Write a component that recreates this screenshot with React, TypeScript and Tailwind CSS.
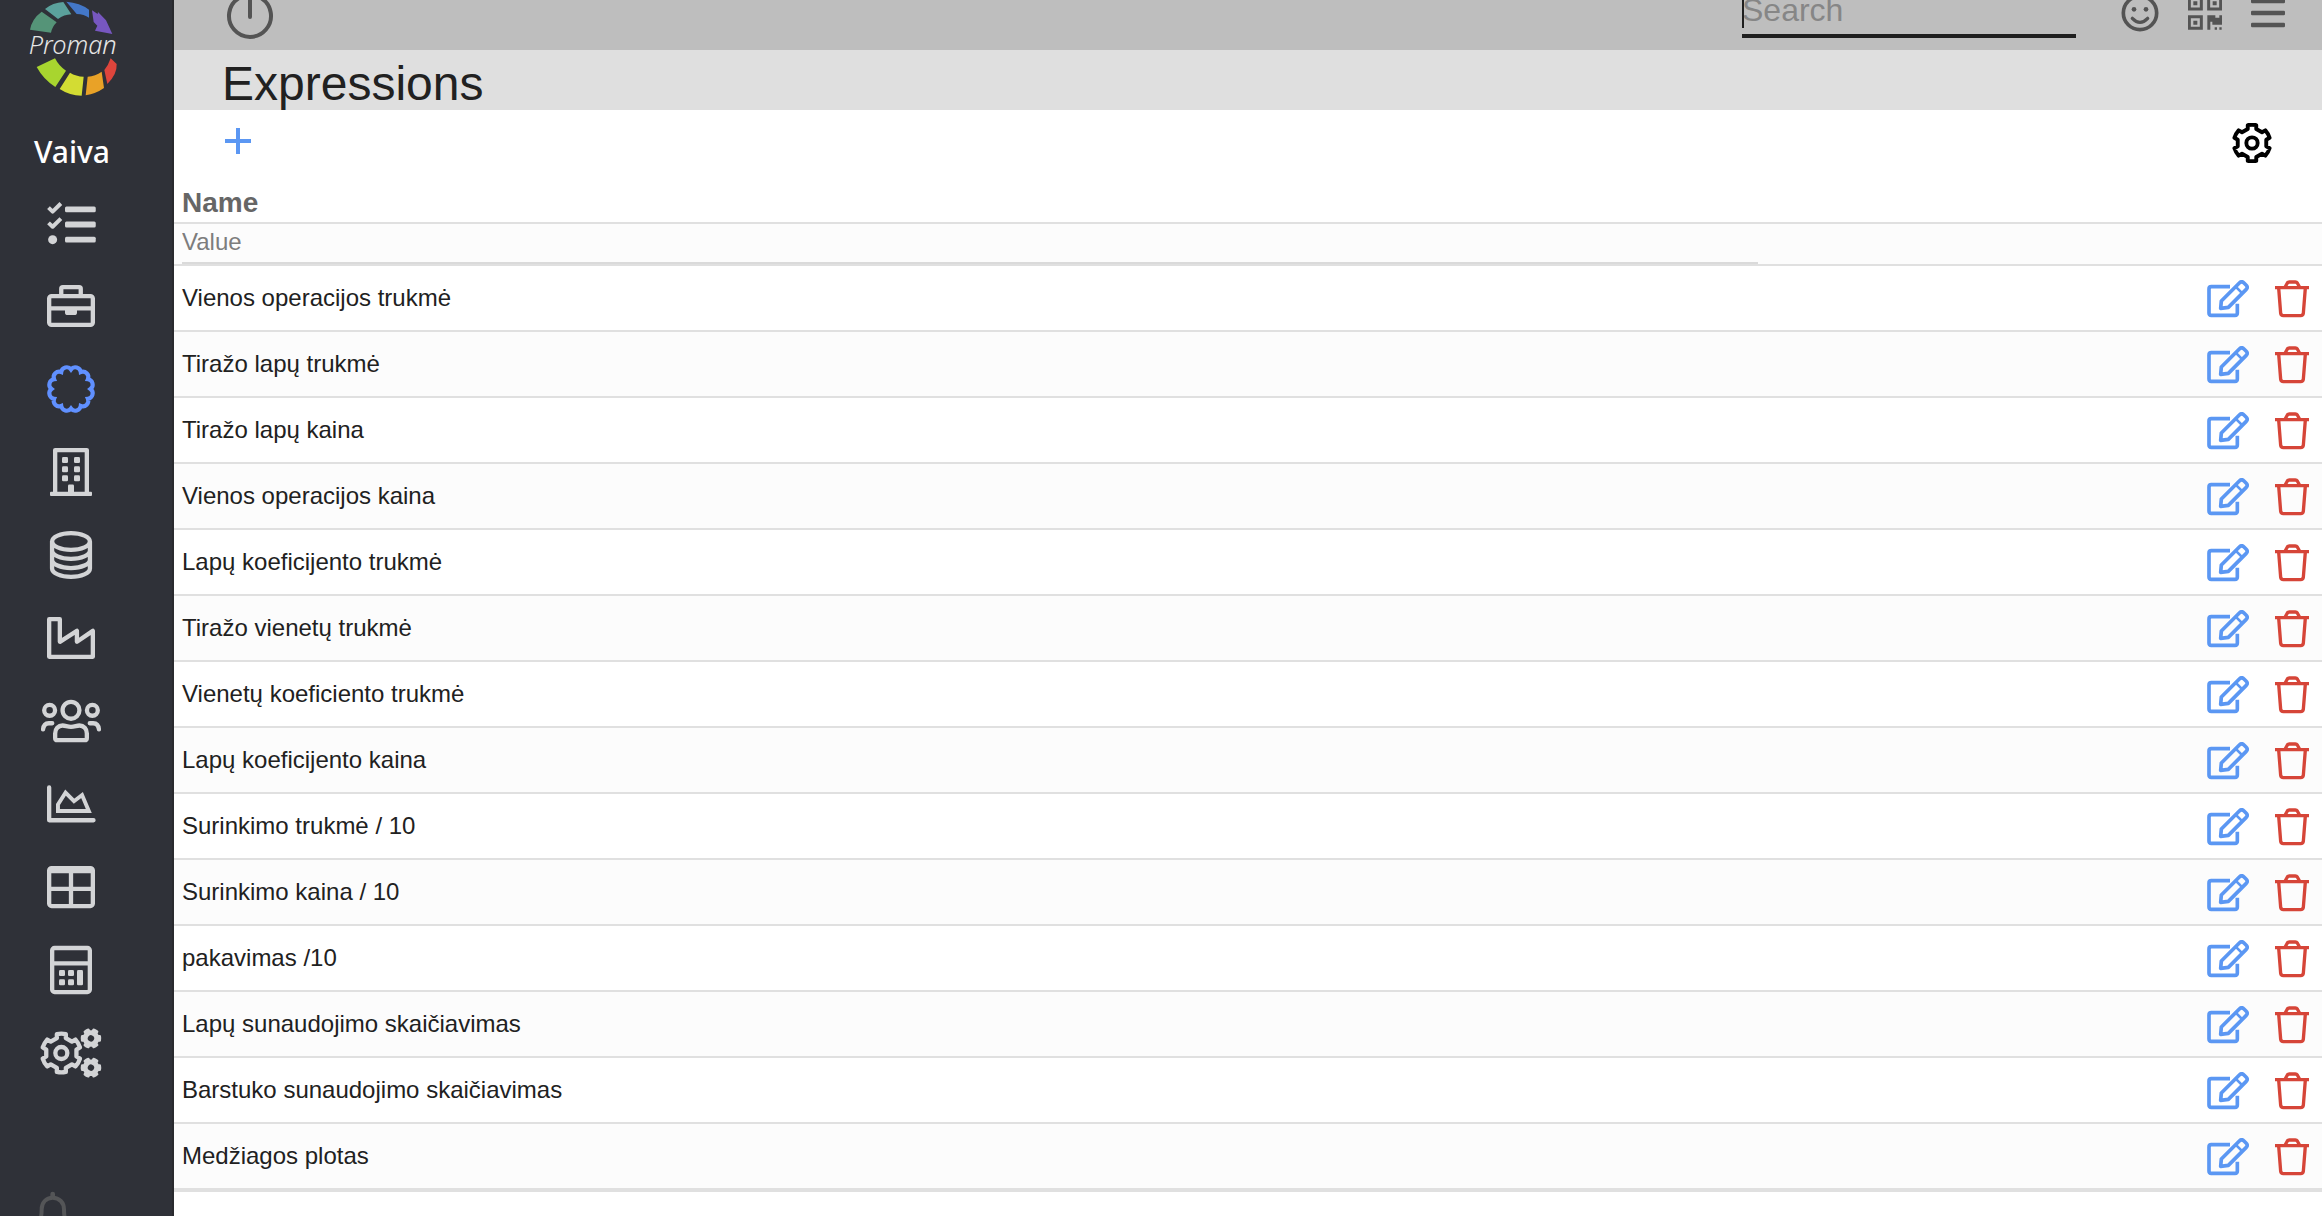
import React, { useState } from 'react'

interface Expression {
    id: number
    name: string
}

const expressions: Expression[] = [
    { id: 1, name: 'Vienos operacijos trukmė' },
    { id: 2, name: 'Tiražo lapų trukmė' },
    { id: 3, name: 'Tiražo lapų kaina' },
    { id: 4, name: 'Vienos operacijos kaina' },
    { id: 5, name: 'Lapų koeficijento trukmė' },
    { id: 6, name: 'Tiražo vienetų trukmė' },
    { id: 7, name: 'Vienetų koeficiento trukmė' },
    { id: 8, name: 'Lapų koeficijento kaina' },
    { id: 9, name: 'Surinkimo trukmė / 10' },
    { id: 10, name: 'Surinkimo kaina / 10' },
    { id: 11, name: 'pakavimas /10' },
    { id: 12, name: 'Lapų sunaudojimo skaičiavimas' },
    { id: 13, name: 'Barstuko sunaudojimo skaičiavimas' },
    { id: 14, name: 'Medžiagos plotas' },
]

// Six-tooth gear outline centred on 0,0
const GEAR =
    'M-48-158V-202Q0-212 48-202V-158L113-121L151-143Q184-106 199-59L161-37V37L199 59Q184 106 151 143L113 121L48 158V202Q0 212-48 202V158L-113 121L-151 143Q-184 106-199 59L-161 37V-37L-199-59Q-184-106-151-143L-113-121Z'
const GEAR_HOLE = 'M-98 0A98 98 0 1 0 98 0A98 98 0 1 0-98 0Z'

const NavIcon = ({ children }: { children: React.ReactNode }) => (
    <svg
        viewBox="0 0 640 512"
        className="w-[60px] h-12 overflow-visible"
        fill="none"
        stroke="currentColor"
        strokeWidth="46"
        aria-hidden="true"
    >
        {children}
    </svg>
)

const navItems = [
    {
        label: 'Tasks',
        icon: (
            <>
                <g strokeLinejoin="round" strokeWidth="42">
                    <path d="M80 92L124 134L212 48" />
                    <path d="M80 254L124 296L212 210" />
                </g>
                <g fill="currentColor" stroke="none">
                    <circle cx="124" cy="434" r="48" />
                    <rect x="256" y="80" width="328" height="62" rx="16" />
                    <rect x="256" y="241" width="328" height="62" rx="16" />
                    <rect x="256" y="403" width="328" height="62" rx="16" />
                </g>
            </>
        ),
    },
    {
        label: 'Projects',
        icon: (
            <>
                <rect x="87" y="151" width="466" height="306" rx="26" />
                <path d="M216 140V72Q216 55 233 55H407Q424 55 424 72V140M88 281H552" />
                <path
                    d="M256 290H384V324Q384 352 356 352H284Q256 352 256 324Z"
                    fill="currentColor"
                    stroke="none"
                />
            </>
        ),
    },
    {
        label: 'Products',
        active: true,
        icon: (
            <path
                strokeWidth="44"
                d="M320 48A58 58 0 0 1 424 76A58 58 0 0 1 500 152A58 58 0 0 1 528 256A58 58 0 0 1 500 360A58 58 0 0 1 424 436A58 58 0 0 1 320 464A58 58 0 0 1 216 436A58 58 0 0 1 140 360A58 58 0 0 1 112 256A58 58 0 0 1 140 152A58 58 0 0 1 216 76A58 58 0 0 1 320 48Z"
            />
        ),
    },
    {
        label: 'Companies',
        icon: (
            <>
                <path strokeLinejoin="round" d="M151 480V22H489V480" />
                <g fill="currentColor" stroke="none">
                    <rect x="96" y="466" width="448" height="46" rx="10" />
                    <rect x="224" y="97" width="64" height="64" rx="14" />
                    <rect x="352" y="97" width="64" height="64" rx="14" />
                    <rect x="224" y="194" width="64" height="64" rx="14" />
                    <rect x="352" y="194" width="64" height="64" rx="14" />
                    <rect x="224" y="291" width="64" height="64" rx="14" />
                    <rect x="352" y="291" width="64" height="64" rx="14" />
                    <path d="M288 480V402Q288 388 302 388H338Q352 388 352 402V480Z" />
                </g>
            </>
        ),
    },
    {
        label: 'Storage',
        icon: (
            <>
                <ellipse cx="320" cy="112" rx="202" ry="89" />
                <path d="M118 112V400A202 89 0 0 0 522 400V112M118 208A202 89 0 0 0 522 208M118 306A202 89 0 0 0 522 306" />
            </>
        ),
    },
    {
        label: 'Production',
        icon: (
            <path
                strokeLinejoin="round"
                d="M87 55H201V297L383 180V297L553 180V457H87Z"
            />
        ),
    },
    {
        label: 'People',
        icon: (
            <>
                <circle cx="92" cy="142" r="58" />
                <circle cx="548" cy="142" r="58" />
                <circle cx="320" cy="142" r="90" />
                <path
                    strokeLinecap="round"
                    d="M22 346C26 300 54 281 84 280H120M618 346C614 300 586 281 556 280H520"
                />
                <path d="M151 436V388C151 342 184 304 230 304C262 304 280 318 320 318C360 318 378 304 410 304C456 304 489 342 489 388V436Q489 460 465 460H175Q151 460 151 436Z" />
            </>
        ),
    },
    {
        label: 'Reports',
        icon: (
            <>
                <path
                    strokeLinecap="round"
                    strokeLinejoin="round"
                    d="M87 80V429H560"
                />
                <path strokeWidth="42" d="M181 331V262L262 134L352 226L438 160L510 331Z" />
            </>
        ),
    },
    {
        label: 'Tables',
        icon: (
            <>
                <rect x="87" y="55" width="466" height="404" rx="26" />
                <path d="M320 80V459M87 275H553M87 86H553" />
            </>
        ),
    },
    {
        label: 'Calculator',
        icon: (
            <>
                <rect x="119" y="21" width="402" height="470" rx="26" />
                <path d="M119 186H521" />
                <g fill="currentColor" stroke="none">
                    <rect x="192" y="257" width="64" height="64" rx="14" />
                    <rect x="288" y="257" width="64" height="64" rx="14" />
                    <rect x="192" y="355" width="64" height="64" rx="14" />
                    <rect x="288" y="355" width="64" height="64" rx="14" />
                    <rect x="384" y="257" width="64" height="162" rx="14" />
                </g>
            </>
        ),
    },
    {
        label: 'Settings',
        icon: (
            <>
                <g transform="translate(217 256)" strokeLinejoin="round">
                    <path d={GEAR} />
                    <circle r="64" />
                </g>
                <g
                    fill="currentColor"
                    fillRule="evenodd"
                    strokeWidth="52"
                    strokeLinejoin="round"
                >
                    <path
                        d={GEAR + GEAR_HOLE}
                        transform="translate(533 100) rotate(30) scale(.47)"
                    />
                    <path
                        d={GEAR + GEAR_HOLE}
                        transform="translate(533 412) rotate(30) scale(.47)"
                    />
                </g>
            </>
        ),
    },
]

const Logo = () => (
    <svg viewBox="0 0 516 288" className="block w-[172px] h-24" role="img" aria-label="Proman">
        <path fill="#559478" d="M90 89Q96 56 125 35L170 67Q157 80 153 98Z" />
        <path fill="#5ba19c" d="M135 27Q158 8 190 6L214 43Q192 44 174 57Z" />
        <path fill="#4377c8" d="M199 5Q240 8 267 29V53Q252 43 230 42Z" />
        <path fill="#7757c0" d="M276 31L293 42L294 36L318 61L337 102L285 92L292 77L281 66Z" />
        <path fill="#a8d52f" d="M110 201L165 175Q178 200 198 212L166 261Q130 238 110 201Z" />
        <path fill="#d3dc33" d="M210 218Q228 229 251 230L245 287Q209 287 179 267Z" />
        <path fill="#e9a227" d="M263 230Q286 228 305 215L312 264Q288 281 257 286Z" />
        <path fill="#de453c" d="M332 175L350 192Q352 222 322 252L313 210Q325 196 332 175Z" />
        <text
            x="86"
            y="161"
            fill="#e6e6e6"
            className="font-['Noto_Sans','Open_Sans',sans-serif] font-light italic text-[76px]"
        >
            Proman
        </text>
    </svg>
)

const Gear = () => (
    <svg
        viewBox="-226 -226 452 452"
        className="size-10"
        fill="none"
        stroke="currentColor"
        strokeWidth="44"
        strokeLinejoin="round"
        aria-hidden="true"
    >
        <path d={GEAR} />
        <circle r="64" />
    </svg>
)

const EditIcon = () => (
    <svg
        viewBox="0 0 126 114"
        className="w-[42px] h-[38px]"
        fill="none"
        stroke="currentColor"
        strokeWidth="11"
        strokeLinejoin="round"
        aria-hidden="true"
    >
        <path d="M69 20H13Q6 20 6 27V99Q6 106 13 106H84Q91 106 91 99V71" />
        <path d="M43 63L97 9Q104 2 111 9L117 15Q124 22 117 29L64 82L41 85Z" />
        <path d="M86 20L106 40" strokeWidth="8" />
    </svg>
)

const TrashIcon = () => (
    <svg
        viewBox="0 0 102 114"
        className="w-[34px] h-[38px]"
        fill="none"
        stroke="currentColor"
        strokeWidth="10"
        aria-hidden="true"
    >
        <path d="M0 23H102M30 22L37 9Q39 6 43 6H61Q65 6 67 9L74 22" />
        <path d="M11 24L17 100Q18 107 25 107H77Q84 107 85 100L91 24" />
    </svg>
)

const Sidebar = () => (
    <aside className="sticky top-0 h-screen w-[174px] shrink-0 overflow-hidden border-r-2 border-[#292a2e] bg-[#2f3138] text-[#d3d4d6]">
        <Logo />
        <div className="pt-[27px] pr-7 text-center font-['Noto_Sans','Open_Sans',sans-serif] text-[30px] leading-[58px] font-medium text-white">
            Vaiva
        </div>
        <nav className="flex flex-col">
            {navItems.map((item) => (
                <a
                    key={item.label}
                    href="#"
                    aria-label={item.label}
                    className={`flex h-[83px] items-center justify-center pr-[30px] ${
                        item.active ? 'text-[#6090ff]' : ''
                    }`}
                >
                    <NavIcon>{item.icon}</NavIcon>
                </a>
            ))}
        </nav>
        <button aria-label="Notifications" className="mt-24 ml-8 block text-[#545557]">
            <svg
                viewBox="0 0 126 144"
                className="w-[42px] h-12"
                fill="none"
                stroke="currentColor"
                strokeWidth="12"
                aria-hidden="true"
            >
                <path strokeLinecap="round" strokeWidth="14" d="M62 12V20" />
                <path d="M62 23C42 23 29 38 29 58C29 88 22 98 10 110H114C102 98 96 88 96 58C96 38 82 23 62 23Z" />
            </svg>
        </button>
    </aside>
)

const Header = () => {
    const [search, setSearch] = useState('')

    return (
        <header className="-mt-6 flex h-[74px] items-center justify-between bg-[#bebebe] pr-[37px] pl-[52px] text-[#545454]">
            <button aria-label="Log out" className="pt-1">
                <svg
                    viewBox="0 0 48 48"
                    className="size-12"
                    fill="none"
                    stroke="currentColor"
                    strokeWidth="4"
                    strokeLinecap="round"
                    aria-hidden="true"
                >
                    <path d="M13 7A21 21 0 1 0 35 7M24 2V26" />
                </svg>
            </button>
            <div className="flex h-full items-center gap-[29px]">
                <div className="relative mr-4 mb-3 self-end">
                    <input
                        type="text"
                        aria-label="Search"
                        placeholder="Search"
                        value={search}
                        onChange={(e) => setSearch(e.target.value)}
                        className="block h-[58px] w-[334px] border-b-4 border-[#1f1f1f] pt-1.5 text-[32px] text-[#212121] outline-none placeholder:text-[#868686]"
                    />
                    {/* Text cursor */}
                    <span className="absolute bottom-2.5 left-0 h-10 w-0.5 bg-[#1f1f1f]"></span>
                </div>
                <button aria-label="Feedback">
                    <svg
                        viewBox="0 0 114 114"
                        className="size-[38px]"
                        fill="none"
                        stroke="currentColor"
                        strokeWidth="11"
                        aria-hidden="true"
                    >
                        <circle cx="57" cy="57" r="50" />
                        <path d="M34 73Q57 97 80 73" strokeLinecap="round" strokeWidth="10" />
                        <g fill="currentColor" stroke="none">
                            <circle cx="39" cy="46" r="7" />
                            <circle cx="75" cy="46" r="7" />
                        </g>
                    </svg>
                </button>
                <button aria-label="Scan code">
                    <svg
                        viewBox="0 0 102 102"
                        className="size-[34px]"
                        fill="none"
                        stroke="currentColor"
                        strokeWidth="9"
                        aria-hidden="true"
                    >
                        <path d="M4 4H40V39H4ZM62 4H98V39H62ZM4 62H40V97H4Z" />
                        <g fill="currentColor" stroke="none">
                            <path d="M16 16H28V28H16ZM74 16H86V28H74ZM16 74H28V86H16Z" />
                            <path d="M58 58H82V65H94V58H102V86H73V77H67V101H58Z" />
                            <path d="M80 94H87V101H80ZM94 94H101V101H94Z" />
                        </g>
                    </svg>
                </button>
                <button aria-label="Menu">
                    <svg
                        viewBox="0 0 102 102"
                        className="size-[34px]"
                        fill="currentColor"
                        aria-hidden="true"
                    >
                        <rect y="8" width="102" height="14" rx="4" />
                        <rect y="44" width="102" height="14" rx="4" />
                        <rect y="80" width="102" height="14" rx="4" />
                    </svg>
                </button>
            </div>
        </header>
    )
}

const App = () => {
    const [filter, setFilter] = useState('')

    const visible = expressions.filter((exp) =>
        exp.name.toLowerCase().includes(filter.toLowerCase())
    )

    return (
        <div className="flex h-screen overflow-hidden bg-white font-['Liberation_Sans',Arial,sans-serif] text-[#212121]">
            <Sidebar />
            <main className="min-w-0 flex-1">
                <Header />
                <h1 className="bg-[#dfdfdf] pt-2 pl-12 text-5xl leading-13">Expressions</h1>

                <div className="flex h-16 items-center justify-between pr-[50px] pl-[51px]">
                    <button aria-label="Add expression" className="pb-0.5 text-[#5b97f3]">
                        <svg
                            viewBox="0 0 26 26"
                            className="size-[26px]"
                            stroke="currentColor"
                            strokeWidth="4"
                            aria-hidden="true"
                        >
                            <path d="M13 0V26M0 13H26" />
                        </svg>
                    </button>
                    <button aria-label="Table settings" className="pt-0.5 text-black">
                        <Gear />
                    </button>
                </div>

                <table className="w-full table-fixed border-separate border-spacing-0 border-b-2 border-[#e0e0e0] text-2xl">
                    <thead>
                        <tr>
                            <th
                                scope="col"
                                className="h-[50px] w-[74%] border-b-2 border-[#e0e0e0] pt-2.5 pl-2 text-left text-[28px] leading-8 text-[#666666]"
                            >
                                Name
                            </th>
                            <td className="border-b-2 border-[#e0e0e0]"></td>
                        </tr>
                        <tr className="bg-[#fcfcfc]">
                            <td className="border-b-2 border-[#e0e0e0] p-0 pr-1.5 pl-2">
                                <input
                                    type="text"
                                    aria-label="Filter by name"
                                    placeholder="Value"
                                    value={filter}
                                    onChange={(e) => setFilter(e.target.value)}
                                    className="block h-10 w-full border-b-2 border-[#dadada] pb-0.5 outline-none placeholder:text-[#7d7d7d]"
                                />
                            </td>
                            <td className="border-b-2 border-[#e0e0e0]"></td>
                        </tr>
                    </thead>
                    <tbody>
                        {visible.map((exp) => (
                            <tr key={exp.id} className="even:bg-[#fcfcfc]">
                                <td className="h-[66px] border-b-2 border-[#e0e0e0] py-0 pl-2">
                                    {exp.name}
                                </td>
                                <td className="border-b-2 border-[#e0e0e0] pt-0.5 pr-[13px] pb-0">
                                    <div className="flex justify-end gap-[26px]">
                                        <button
                                            aria-label={`Edit ${exp.name}`}
                                            className="text-[#5b97f3]"
                                        >
                                            <EditIcon />
                                        </button>
                                        <button
                                            aria-label={`Delete ${exp.name}`}
                                            className="text-[#d64538]"
                                        >
                                            <TrashIcon />
                                        </button>
                                    </div>
                                </td>
                            </tr>
                        ))}
                    </tbody>
                </table>
            </main>
        </div>
    )
}

export default App
